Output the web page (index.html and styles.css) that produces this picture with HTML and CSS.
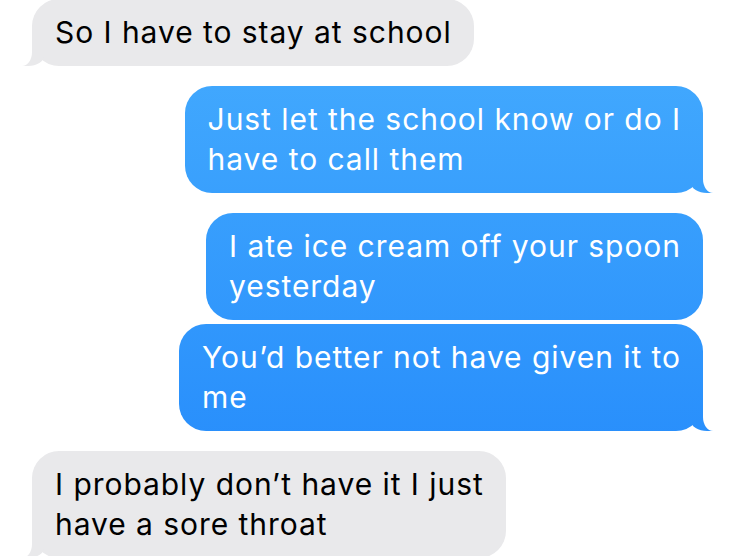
FILE: index.html
```html
<html>

<head>
    <title>Messages</title>
    <link rel="stylesheet" href="styles.css">
</head>

<body>
    <div class="thread">
        <div class="msg received tail">So I have to stay at school</div>
        <div class="msg sent tail">Just let the school know or do I<br>have to call them</div>
        <div class="msg sent">I ate ice cream off your spoon<br>yesterday</div>
        <div class="msg sent tail cont">You’d better not have given it to<br>me</div>
        <div class="msg received tail">I probably don’t have it I just<br>have a sore throat</div>
    </div>
</body>

</html>
```

FILE: styles.css
```css
body {
    margin: 0;
    background-color: #FFF;
    font-family: Inter, 'Liberation Sans', sans-serif;
    overflow: hidden;
}

.thread {
    display: flex;
    flex-direction: column;
    padding: 0 32px;
    margin-top: -1px;
}

.msg {
    position: relative;
    padding: 13px 22px 14px 23px;
    border-radius: 27px;
    font-size: 30px;
    line-height: 40px;
    letter-spacing: 0.95px;
    white-space: nowrap;
}

.msg + .msg {
    margin-top: 20px;
}

.msg.cont {
    margin-top: 4px;
}

.received {
    align-self: flex-start;
    color: #000;
    background-color: #E9E9EB;
}

.sent {
    align-self: flex-end;
    color: #FFF;
    background: linear-gradient(to bottom, #46ADFE 0, #2187FB 556px) fixed;
}

/* tails */

.tail:before,
.tail:after {
    content: '';
    position: absolute;
    bottom: 0;
    height: 28px;
}

.sent.tail:before {
    right: -10px;
    width: 22px;
    background: inherit;
    border-bottom-left-radius: 16px 10px;
}

.sent.tail:after {
    right: -24px;
    width: 24px;
    background-color: #FFF;
    border-bottom-left-radius: 10px 14px;
}

.received.tail:before {
    left: -10px;
    width: 22px;
    background-color: #E9E9EB;
    border-bottom-right-radius: 16px 10px;
}

.received.tail:after {
    left: -24px;
    width: 24px;
    background-color: #FFF;
    border-bottom-right-radius: 10px 14px;
}
```
